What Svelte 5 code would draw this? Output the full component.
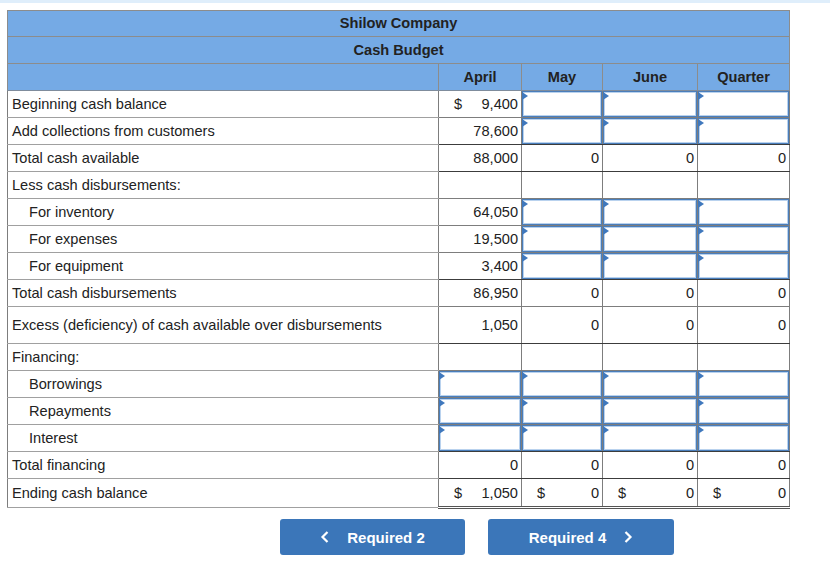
<script>
  const rows = [
    { label: 'Beginning cash balance', april: '9,400', sym: true, inputs: [1, 1, 1] },
    { label: 'Add collections from customers', april: '78,600', inputs: [1, 1, 1], dark: true },
    { label: 'Total cash available', april: '88,000', vals: ['0', '0', '0'], dark: true },
    { label: 'Less cash disbursements:', empty: true },
    { label: 'For inventory', indent: true, april: '64,050', inputs: [1, 1, 1] },
    { label: 'For expenses', indent: true, april: '19,500', inputs: [1, 1, 1] },
    { label: 'For equipment', indent: true, april: '3,400', inputs: [1, 1, 1], dark: true },
    { label: 'Total cash disbursements', april: '86,950', vals: ['0', '0', '0'] },
    { label: 'Excess (deficiency) of cash available over disbursements', april: '1,050', vals: ['0', '0', '0'], tall: true, dark: true },
    { label: 'Financing:', empty: true },
    { label: 'Borrowings', indent: true, allInputs: true },
    { label: 'Repayments', indent: true, allInputs: true },
    { label: 'Interest', indent: true, allInputs: true, dark: true },
    { label: 'Total financing', april: '0', vals: ['0', '0', '0'], dark: true },
    { label: 'Ending cash balance', april: '1,050', sym: true, vals: ['0', '0', '0'], allSym: true, last: true }
  ];
</script>

<div class="strip"></div>
<table>
  <colgroup>
    <col class="c0" /><col class="c1" /><col class="c2" /><col class="c3" /><col class="c4" />
  </colgroup>
  <thead>
    <tr class="h1"><th colspan="5">Shilow Company</th></tr>
    <tr><th colspan="5">Cash Budget</th></tr>
    <tr class="h3">
      <th></th><th>April</th><th>May</th><th>June</th><th>Quarter</th>
    </tr>
  </thead>
  <tbody>
    {#each rows as r}
      <tr class:tall={r.tall} class:dark={r.dark} class:last={r.last}>
        <td class="label" class:indent={r.indent}>{r.label}</td>
        {#if r.empty}
          <td></td><td></td><td></td><td></td>
        {:else if r.allInputs}
          {#each [0, 1, 2, 3] as _}
            <td class="input"><span class="flag"></span></td>
          {/each}
        {:else}
          <td class="num">
            <div class="amount">
              {#if r.sym}<span class="sym">$</span>{/if}
              <span class="val">{r.april}</span>
            </div>
          </td>
          {#if r.inputs}
            {#each r.inputs as _}
              <td class="input"><span class="flag"></span></td>
            {/each}
          {:else}
            {#each r.vals as v}
              <td class="num">
                <div class="amount">
                  {#if r.allSym}<span class="sym">$</span>{/if}
                  <span class="val">{v}</span>
                </div>
              </td>
            {/each}
          {/if}
        {/if}
      </tr>
    {/each}
  </tbody>
</table>

<div class="nav">
  <button class="btn">
    <svg width="10" height="14" viewBox="0 0 10 14"><path d="M7.5 2 L2.5 7 L7.5 12" fill="none" stroke="#fff" stroke-width="2.2" /></svg>
    <span class="gap">Required 2</span>
  </button>
  <button class="btn b2">
    <span class="gap2">Required 4</span>
    <svg width="10" height="14" viewBox="0 0 10 14"><path d="M2.5 2 L7.5 7 L2.5 12" fill="none" stroke="#fff" stroke-width="2.2" /></svg>
  </button>
</div>

<style>
  :global(body) {
    margin: 0;
    background: #fff;
    font-family: "Liberation Sans", Arial, sans-serif;
    color: #222;
  }
  .strip {
    height: 3px;
    background: #dfeefb;
  }
  table {
    margin: 7px 0 0 7px;
    width: 782px;
    table-layout: fixed;
    border-collapse: collapse;
    font-size: 14.6px;
  }
  .c0 { width: 431px; }
  .c1 { width: 83px; }
  .c2 { width: 81px; }
  .c3 { width: 95px; }
  .c4 { width: 92px; }
  th {
    box-sizing: border-box;
    background: #75aae5;
    border: 1px solid #8c8c8c;
    height: 27px;
    padding: 0 0 1px;
    font-weight: bold;
    font-size: 14.6px;
    color: #222;
    text-align: center;
  }
  .h1 th { height: 26px; }
  .h3 th { padding: 0 0 1px; border-bottom-color: #7f8c9c; }
  td {
    box-sizing: border-box;
    border: 1px solid #7d7d7d;
    height: 27px;
    padding: 0;
    line-height: 16px;
  }
  td.label {
    border-bottom-color: #a0a0a0;
    padding-left: 4px;
  }
  td.indent { padding-left: 21px; }
  tr.tall td { height: 37px; }
  tr.dark td:not(.label) { border-bottom-color: #3c3c3c; }
  tr.last td { height: 29px; }
  tr.last td:not(.label) { border-bottom: 3px double #555; }
  .amount {
    display: flex;
    align-items: center;
    padding-right: 3px;
  }
  .val { margin-left: auto; }
  .sym { margin-left: 15px; }
  td.input {
    position: relative;
    background: #fff;
    box-shadow: inset 0 0 0 1px #4a7ebb, inset 0 0 0 2px #b9d2ee;
  }
  .flag {
    position: absolute;
    left: 0;
    top: 1px;
    width: 0;
    height: 0;
    border-top: 4.5px solid transparent;
    border-bottom: 4.5px solid transparent;
    border-left: 6px solid #3f78bd;
  }
  .nav {
    display: flex;
    gap: 23px;
    margin: 10px 0 0 280px;
  }
  .btn {
    width: 185px;
    height: 36px;
    background: #3b76b9;
    border: none;
    border-radius: 3px;
    color: #fff;
    font: bold 15px "Liberation Sans", Arial, sans-serif;
    display: flex;
    align-items: center;
    justify-content: center;
    padding: 0;
  }
  .b2 { width: 186px; }
  .gap { margin-left: 17px; }
  .gap2 { margin-right: 17px; }
</style>
